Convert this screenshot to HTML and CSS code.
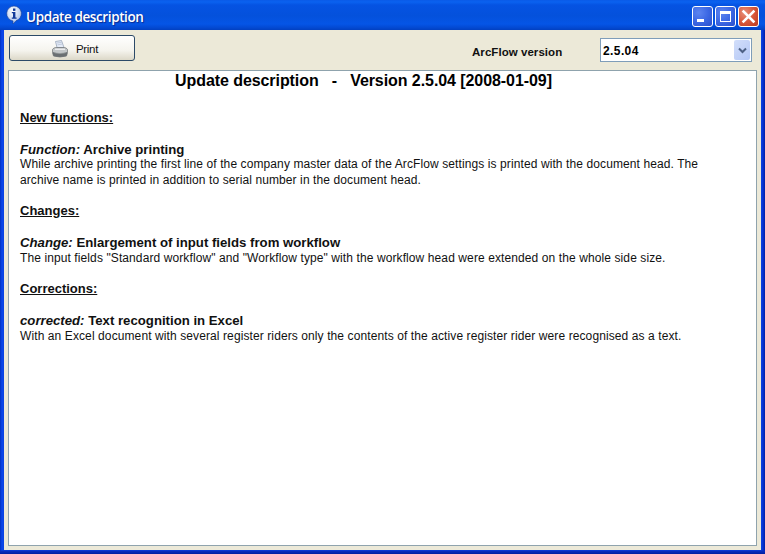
FILE: index.html
```html
<!DOCTYPE html>
<html lang="en">
<head>
<meta charset="utf-8">
<title>Update description</title>
<link rel="stylesheet" href="styles.css">
</head>
<body>
<div class="window">
  <header class="titlebar">
    <svg class="info-icon" width="18" height="20" viewBox="0 0 18 20">
      <defs><radialGradient id="ig" cx="0.4" cy="0.3" r="0.8"><stop offset="0" stop-color="#fff"/><stop offset="1" stop-color="#9db8e8"/></radialGradient></defs>
      <path d="M9 1a7.5 7.5 0 0 1 2 14.7L8 19v-3.1A7.5 7.5 0 0 1 9 1z" fill="url(#ig)" stroke="#1c3f94" stroke-width=".6"/>
      <rect x="8" y="3.500" width="2.400" height="2.400" fill="#123a9a"/>
      <path d="M6.800 7h3.600v5.500h1.200v1.300H6.800v-1.300H8V8.300H6.800z" fill="#123a9a"/>
    </svg>
    <span class="title-text">Update description</span>
    <div class="caption-buttons">
      <div class="cap cap-blue"><span class="min-bar"></span></div>
      <div class="cap cap-blue"><span class="max-box"></span></div>
      <div class="cap cap-red">
        <svg width="15" height="15" viewBox="0 0 15 15"><path d="M2.500 2.500l10 10M12.500 2.500l-10 10" stroke="#fff" stroke-width="2.500" stroke-linecap="square"/></svg>
      </div>
    </div>
  </header>
  <div class="client">
    <div class="toolbar">
      <button class="print-btn" type="button">
        <svg width="18" height="18" viewBox="0 0 18 18">
          <path d="M4.500 1.500l6-1 2.500 7H6z" fill="#e4ebf6" stroke="#8d9bb2" stroke-width=".7"/>
          <path d="M6 3l4.500-.7M6.500 4.800l4.500-.7" stroke="#a9b6cc" stroke-width=".6"/>
          <path d="M1.500 9.500Q2.500 7.500 5 7.500h8q2.500 0 3.500 2v3l-1 3.500q-6.500 2-13 0l-1-3.500z" fill="#c3c7c9" stroke="#6d7173" stroke-width=".7"/>
          <path d="M4 9.300h10" stroke="#f0f1f1" stroke-width="1.200"/>
          <path d="M1.800 12q7.200 2.500 14.400 0v2l-.8 2q-6.400 1.800-12.800 0l-.8-2z" fill="#6a6f72"/>
          <path d="M3.500 12.800q5.500 1.500 11 0" stroke="#9ea3a5" stroke-width=".7" fill="none"/>
        </svg>
        <span class="print-label">Print</span>
      </button>
      <label class="version-label">ArcFlow version</label>
      <div class="combo">
        <span class="combo-value">2.5.04</span>
        <span class="combo-arrow">
          <svg width="9" height="7" viewBox="0 0 9 7"><path d="M1 1.500l3.500 3.500L8 1.500" fill="none" stroke="#4d6185" stroke-width="2"/></svg>
        </span>
      </div>
    </div>
    <main class="panel">
      <h1 class="doc-title">Update description&nbsp;&nbsp; -&nbsp;&nbsp; Version 2.5.04 [2008-01-09]</h1>
      <h2 class="section">New functions:</h2>
      <h3 class="item"><em>Function:</em> Archive printing</h3>
      <p class="desc">While archive printing the first line of the company master data of the ArcFlow settings is printed with the document head. The<br>archive name is printed in addition to serial number in the document head.</p>
      <h2 class="section">Changes:</h2>
      <h3 class="item"><em>Change:</em> Enlargement of input fields from workflow</h3>
      <p class="desc">The input fields "Standard workflow" and "Workflow type" with the workflow head were extended on the whole side size.</p>
      <h2 class="section">Corrections:</h2>
      <h3 class="item"><em>corrected:</em> Text recognition in Excel</h3>
      <p class="desc">With an Excel document with several register riders only the contents of the active register rider were recognised as a text.</p>
    </main>
  </div>
</div>
</body>
</html>
```
FILE: styles.css
```css
* { box-sizing: border-box; }
html, body { margin: 0; padding: 0; }
body { width: 765px; height: 554px; overflow: hidden; font-family: "Liberation Sans", Arial, sans-serif; }
.window {
  width: 765px; height: 554px; display: flex; flex-direction: column;
  padding: 0 4px 4px;
  background:
    linear-gradient(0deg, #001ea0 0, #0a2fc0 3px, transparent 4px),
    linear-gradient(90deg, #0030c0 0, #0a48ec 2px, #0a44e4 3px, #0a44e4 761px, #0a30d0 763px, #0020a8 765px);
}
.titlebar {
  height: 30px; flex: none; margin: 0 -4px; padding: 0 6px 0 5px;
  display: flex; align-items: center; color: #fff;
  background: linear-gradient(180deg, #0a5be8 0, #0a62f0 2px, #0553e2 5px, #0451dc 16px, #0555e6 24px, #0348d0 28px, #0240c0 30px);
}
.info-icon { flex: none; margin: 0 3px 0 0; }
.title-text { flex: 1; font-family: "Open Sans", "Liberation Sans", sans-serif; font-size: 13.500px; font-weight: 600; letter-spacing: -.4px; color: #fff; text-shadow: 1px 1px 1px #0a2a90; margin-top: 3px; }
.caption-buttons { display: flex; gap: 2px; margin-top: 3px; }
.cap {
  width: 21px; height: 21px; border: 1px solid #fff; border-radius: 3px;
  display: flex; align-items: center; justify-content: center; position: relative;
}
.cap-blue { background: radial-gradient(circle at 30% 30%, #5d85f0 0, #3c68e4 50%, #2a4fcc 100%); }
.cap-red { background: radial-gradient(circle at 30% 30%, #e8907a 0, #d8583a 50%, #bb3a1e 100%); }
.min-bar { position: absolute; left: 4px; bottom: 4px; width: 7px; height: 3px; background: #fff; }
.max-box { width: 11px; height: 11px; border: 1px solid #fff; border-top-width: 3px; }
.client { flex: 1; background: #ece9d8; padding: 5px 4px 4px 4px; display: flex; flex-direction: column; min-height: 0; }
.toolbar { height: 35px; flex: none; display: flex; align-items: flex-start; }
.print-btn {
  margin-left: 1px; width: 126px; height: 26px; padding: 1px 0 0 5px;
  border: 1px solid #2c4a68; border-radius: 3px;
  background: linear-gradient(180deg, #ffffff 0, #f5f4ee 60%, #dcd8c8 100%);
  display: flex; align-items: center; justify-content: center; gap: 7px;
  font: 12px "Liberation Sans", Arial, sans-serif; color: #111;
}
.print-label { font-size: 11.500px; letter-spacing: -.3px; }
.version-label { margin-left: 337px; margin-top: 10px; font-size: 11.500px; font-weight: bold; letter-spacing: .05px; color: #111; white-space: nowrap; line-height: 14px; width: 128px; }
.combo {
  width: 152px; height: 24px; margin-top: 3px; background: #fff; border: 1px solid #7f9db9;
  display: flex; align-items: center; justify-content: space-between; padding: 0 1px 0 2px;
}
.combo-value { font-size: 12px; font-weight: bold; letter-spacing: .4px; color: #000; padding-top: 1px; }
.combo-arrow {
  width: 16px; height: 20px; border-radius: 2px; background: linear-gradient(135deg, #d2defa, #b4c8f6);
  display: flex; align-items: center; justify-content: center;
}
.panel { flex: 1; background: #fff; border: 1px solid #8fa3ad; padding: 0 11px; color: #111; min-height: 0; }
.doc-title { margin: 0 0 0 155px; font-size: 16px; line-height: 19px; font-weight: bold; letter-spacing: -.07px; color: #000; white-space: nowrap; }
.section { margin: 0; padding-bottom: 1px; font-size: 13px; font-weight: bold; line-height: 16px; text-decoration: underline; }
.doc-title + .section { margin-top: 20px; padding-bottom: 0; }
.desc + .section { margin-top: 14.500px; }
.item { margin: 15.500px 0 0; font-size: 13.200px; line-height: 15.500px; font-weight: bold; }
.item em { font-style: italic; }
.desc { margin: 0; font-size: 12px; letter-spacing: .1px; line-height: 15.500px; }
```
